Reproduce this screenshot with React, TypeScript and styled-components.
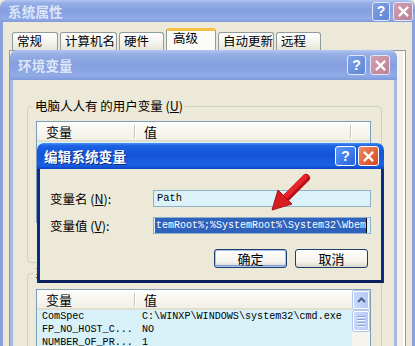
import styled, { createGlobalStyle } from "styled-components";

const CJK = `"Noto Sans CJK SC", "Noto Sans", sans-serif`;
const MONO = `"Liberation Mono", "Noto Sans CJK SC", monospace`;

const GlobalStyle = createGlobalStyle`
  html, body {
    margin: 0;
    padding: 0;
    background: #ece9d8;
  }
  body {
    font-family: ${CJK};
    font-size: 12px;
    color: #000;
  }
`;

const ACTIVE_BAR =
  "linear-gradient(180deg, #4a94f8 0%, #1d63e4 10%, #1453d8 45%, #1a60e6 85%, #0d44c2 100%)";
const INACTIVE_BAR =
  "linear-gradient(180deg, #b2c6f2 0%, #95aee6 14%, #859fe0 50%, #91abe6 86%, #7f99da 100%)";

const Desktop = styled.div`
  position: relative;
  width: 415px;
  height: 346px;
  overflow: hidden;
  background: #ece9d8;
`;

const Window = styled.div<{ $x: number; $y: number; $w: number; $h: number }>`
  position: absolute;
  left: ${(p) => p.$x}px;
  top: ${(p) => p.$y}px;
  width: ${(p) => p.$w}px;
  height: ${(p) => p.$h}px;
  display: flex;
  flex-direction: column;
`;

const TitleBar = styled.div<{ $active?: boolean; $h: number; $pl: number; $pr: number }>`
  flex: none;
  height: ${(p) => p.$h}px;
  display: flex;
  align-items: center;
  padding: 0 ${(p) => p.$pr}px 0 ${(p) => p.$pl}px;
  border-radius: 7px 7px 0 0;
  background: ${(p) => (p.$active ? ACTIVE_BAR : INACTIVE_BAR)};
`;

const Title = styled.div<{ $active?: boolean }>`
  flex: 1;
  font-family: ${CJK};
  font-weight: 700;
  font-size: 13.5px;
  letter-spacing: 0.2px;
  color: ${(p) => (p.$active ? "#ffffff" : "#dde6f8")};
  text-shadow: ${(p) => (p.$active ? "1px 1px 0 #0b2a7c" : "none")};
`;

const CaptionButtons = styled.div<{ $gap: number }>`
  display: flex;
  gap: ${(p) => p.$gap}px;
`;

const CapButton = styled.div<{ $kind: "help" | "close"; $active?: boolean; $w: number; $h: number }>`
  width: ${(p) => p.$w}px;
  height: ${(p) => p.$h}px;
  box-sizing: border-box;
  display: flex;
  align-items: center;
  justify-content: center;
  border-radius: 3px;
  border: 1px solid ${(p) => (p.$active ? "#ffffff" : "#dfe6f7")};
  background: ${(p) =>
    p.$kind === "help"
      ? p.$active
        ? "linear-gradient(135deg, #5d9bf8, #2463dc)"
        : "linear-gradient(135deg, #7fa2e4, #5f85d6)"
      : p.$active
      ? "linear-gradient(135deg, #f08a64, #d8471e)"
      : "linear-gradient(135deg, #d3a0b2, #bb7f96)"};
  color: #fff;
  font-family: "Liberation Sans", sans-serif;
  font-weight: 700;
  font-size: 14px;
  line-height: 1;
`;

/* ---------- system properties window ---------- */

const SysBody = styled.div`
  flex: 1;
  display: flex;
  flex-direction: column;
  background: #ece9d8;
  border-left: 3px solid #8aa2dc;
  border-right: 3px solid #8aa2dc;
  padding: 6px 6px 0 6px;
`;

const TabRow = styled.div`
  display: flex;
  align-items: flex-end;
  gap: 2px;
  height: 22px;
  padding-left: 3px;
`;

const Tab = styled.div<{ $active?: boolean; $w: number }>`
  width: ${(p) => p.$w}px;
  height: ${(p) => (p.$active ? 22 : 18)}px;
  box-sizing: border-box;
  padding-left: ${(p) => (p.$active ? 6 : 4)}px;
  border: 1px solid #919b9c;
  border-bottom: none;
  border-top: ${(p) => (p.$active ? "3px solid #f5be45" : "1px solid #919b9c")};
  border-radius: 3px 3px 0 0;
  background: ${(p) =>
    p.$active ? "#fbfbf8" : "linear-gradient(180deg, #ffffff, #f3f2ec 60%, #e6e3d8)"};
  font-size: 12.5px;
  line-height: ${(p) => (p.$active ? 14 : 16)}px;
  white-space: nowrap;
`;

const TabPanel = styled.div`
  flex: 1;
  border: 1px solid #919b9c;
  border-bottom: none;
  background: #f3f1e8;
  box-shadow: inset -2px 0 0 #ffffff;
`;

/* ---------- environment variables window ---------- */

const EnvBody = styled.div`
  flex: 1;
  display: flex;
  flex-direction: column;
  background: #ece9d8;
  border-left: 3px solid #a9b8e0;
  border-right: 3px solid #a9b8e0;
  padding: 0 12px 0 14px;
`;

const GroupBox = styled.div<{ $mt: number; $h: number; $pt: number }>`
  position: relative;
  box-sizing: border-box;
  margin-top: ${(p) => p.$mt}px;
  height: ${(p) => p.$h}px;
  flex: none;
  border: 1px solid #d0d0bf;
  border-radius: 4px;
  padding: ${(p) => p.$pt}px 10px 0 8px;
`;

const Legend = styled.span`
  position: absolute;
  top: -9px;
  left: 5px;
  padding: 0 2px;
  background: #ece9d8;
  font-size: 12.5px;
  line-height: 16px;
  white-space: nowrap;
`;

const Key = styled.span`
  text-decoration: underline;
`;

const ListView = styled.div<{ $h: number }>`
  height: ${(p) => p.$h}px;
  display: flex;
  border: 1px solid #7f9db9;
  background: #d8f1f9;
  overflow: hidden;
`;

const ListMain = styled.div`
  flex: 1;
  min-width: 0;
  display: flex;
  flex-direction: column;
`;

const HeaderRow = styled.div<{ $filler?: boolean }>`
  display: grid;
  grid-template-columns: 98px 1fr ${(p) => (p.$filler ? "19px" : "")};
  height: 20px;
  flex: none;
  box-sizing: border-box;
  border-bottom: 2px solid #e2decd;
  background: linear-gradient(180deg, #fdfdfb, #f1efe6);
`;

const HeaderCell = styled.div<{ $last?: boolean }>`
  display: flex;
  align-items: center;
  padding-left: 9px;
  font-size: 13px;
  position: relative;
  &::after {
    content: "";
    display: ${(p) => (p.$last ? "none" : "block")};
    position: absolute;
    right: 0;
    top: 3px;
    bottom: 3px;
    width: 1px;
    background: #cbc7b8;
    box-shadow: 1px 0 0 #ffffff;
  }
`;

const Row = styled.div`
  display: grid;
  grid-template-columns: 100px 1fr;
  height: 13px;
  flex: none;
  padding-left: 5px;
  font-family: ${MONO};
  font-size: 10.1px;
  line-height: 13px;
  white-space: nowrap;
  &:first-of-type {
    margin-top: 2px;
  }
`;

const ScrollBar = styled.div`
  width: 18px;
  flex: none;
  display: flex;
  flex-direction: column;
  gap: 2px;
  padding-top: 1px;
  background: #f5f4ef;
`;

const ScrollPart = styled.div<{ $h: number }>`
  height: ${(p) => p.$h}px;
  margin: 0 1px;
  box-sizing: border-box;
  display: flex;
  flex-direction: column;
  align-items: center;
  justify-content: center;
  gap: 2px;
  border: 1px solid #ffffff;
  border-radius: 2px;
  background: linear-gradient(90deg, #c9d8fb, #b6cbf7);
  box-shadow: 0 0 0 1px #b3c6ee;
`;

const Grip = styled.div`
  width: 8px;
  height: 1px;
  background: #8ba4d8;
  box-shadow: 0 1px 0 #eef3fe;
`;

/* ---------- edit dialog ---------- */

const EditBody = styled.div`
  flex: 1;
  display: flex;
  flex-direction: column;
  background: #ece9d8;
  border: 3px solid #0c2d86;
  border-top: none;
  border-bottom-color: #0a1f5e;
  padding: 21px 10px 0 10px;
`;

const FieldGrid = styled.div`
  display: grid;
  grid-template-columns: 103px 1fr;
  grid-auto-rows: 17px;
  row-gap: 10px;
  align-items: center;
`;

const FieldLabel = styled.div`
  font-size: 12.5px;
  line-height: 17px;
  white-space: nowrap;
`;

const TextBox = styled.div`
  height: 17px;
  box-sizing: border-box;
  border: 1px solid #8fb0c8;
  background: #dcf2f9;
  padding: 0 1px;
  overflow: hidden;
  white-space: nowrap;
  font-family: ${MONO};
  font-size: 10.4px;
  line-height: 15px;
`;

const Plain = styled.span`
  padding-left: 2px;
`;

const Selection = styled.span`
  display: inline-block;
  height: 15px;
  padding-left: 1px;
  background: #2f62bd;
  color: #ffffff;
  font-size: 10px;
  border-right: 1px solid #000;
`;

const ButtonRow = styled.div`
  display: flex;
  justify-content: flex-end;
  gap: 8px;
  margin-top: 15px;
  padding-right: 3px;
`;

const XPButton = styled.div<{ $default?: boolean }>`
  width: 73px;
  height: 19px;
  box-sizing: border-box;
  display: flex;
  align-items: center;
  justify-content: center;
  border: 1px solid #1c3f6e;
  border-radius: 3px;
  background: linear-gradient(180deg, #ffffff, #f3f2ec 70%, #d9d5c8);
  box-shadow: ${(p) => (p.$default ? "inset 0 0 0 1px #a9c2ea, inset 0 -1px 0 1px #7ea0da" : "none")};
  font-size: 13px;
  line-height: 1;
`;

const Arrow = styled.svg`
  position: absolute;
  left: 262px;
  top: 168px;
`;

const CloseGlyph = ({ size }: { size: number }) => (
  <svg width={size} height={size} viewBox="0 0 10 10">
    <path d="M1.5 1.5 L8.5 8.5 M8.5 1.5 L1.5 8.5" stroke="#fff" strokeWidth="2" strokeLinecap="square" />
  </svg>
);

const tabs = [
  { label: "常规", w: 46 },
  { label: "计算机名", w: 57 },
  { label: "硬件", w: 45 },
  { label: "高级", w: 50, active: true },
  { label: "自动更新", w: 56 },
  { label: "远程", w: 45 },
];

const sysVars = [
  { name: "ComSpec", value: "C:\\WINXP\\WINDOWS\\system32\\cmd.exe" },
  { name: "FP_NO_HOST_C...", value: "NO" },
  { name: "NUMBER_OF_PR...", value: "1" },
];

export default function App() {
  return (
    <>
      <GlobalStyle />
      <Desktop>
        {/* 系统属性 */}
        <Window $x={0} $y={0} $w={415} $h={360}>
          <TitleBar $h={22} $pl={8} $pr={2}>
            <Title>系统属性</Title>
            <CaptionButtons $gap={3}>
              <CapButton $kind="help" $w={18} $h={19}>?</CapButton>
              <CapButton $kind="close" $w={20} $h={19}>
                <CloseGlyph size={11} />
              </CapButton>
            </CaptionButtons>
          </TitleBar>
          <SysBody>
            <TabRow>
              {tabs.map((t) => (
                <Tab key={t.label} $w={t.w} $active={t.active}>
                  {t.label}
                </Tab>
              ))}
            </TabRow>
            <TabPanel />
          </SysBody>
        </Window>

        {/* 环境变量 */}
        <Window $x={10} $y={50} $w={387} $h={320}>
          <TitleBar $h={30} $pl={8} $pr={7}>
            <Title>环境变量</Title>
            <CaptionButtons $gap={4}>
              <CapButton $kind="help" $w={19} $h={20}>?</CapButton>
              <CapButton $kind="close" $w={20} $h={20}>
                <CloseGlyph size={11} />
              </CapButton>
            </CaptionButtons>
          </TitleBar>
          <EnvBody>
            <GroupBox $mt={26} $h={157} $pt={14}>
              <Legend>
                电脑人人有 的用户变量 (<Key>U</Key>)
              </Legend>
              <ListView $h={100}>
                <ListMain>
                  <HeaderRow $filler>
                    <HeaderCell>变量</HeaderCell>
                    <HeaderCell>值</HeaderCell>
                    <HeaderCell $last />
                  </HeaderRow>
                </ListMain>
              </ListView>
            </GroupBox>
            <GroupBox $mt={10} $h={120} $pt={15}>
              <Legend>
                系统变量 (<Key>S</Key>)
              </Legend>
              <ListView $h={90}>
                <ListMain>
                  <HeaderRow>
                    <HeaderCell>变量</HeaderCell>
                    <HeaderCell $last>值</HeaderCell>
                  </HeaderRow>
                  {sysVars.map((v) => (
                    <Row key={v.name}>
                      <span>{v.name}</span>
                      <span>{v.value}</span>
                    </Row>
                  ))}
                </ListMain>
                <ScrollBar>
                  <ScrollPart $h={18}>
                    <svg width="9" height="6" viewBox="0 0 9 6">
                      <path d="M1 5 L4.5 1.5 L8 5" fill="none" stroke="#4d6185" strokeWidth="2" />
                    </svg>
                  </ScrollPart>
                  <ScrollPart $h={20}>
                    <Grip />
                    <Grip />
                    <Grip />
                    <Grip />
                  </ScrollPart>
                </ScrollBar>
              </ListView>
            </GroupBox>
          </EnvBody>
        </Window>

        {/* 编辑系统变量 */}
        <Window $x={37} $y={143} $w={347} $h={140}>
          <TitleBar $active $h={26} $pl={7} $pr={5}>
            <Title $active>编辑系统变量</Title>
            <CaptionButtons $gap={2}>
              <CapButton $kind="help" $active $w={21} $h={20}>?</CapButton>
              <CapButton $kind="close" $active $w={21} $h={20}>
                <CloseGlyph size={11} />
              </CapButton>
            </CaptionButtons>
          </TitleBar>
          <EditBody>
            <FieldGrid>
              <FieldLabel>
                变量名 (<Key>N</Key>):
              </FieldLabel>
              <TextBox>
                <Plain>Path</Plain>
              </TextBox>
              <FieldLabel>
                变量值 (<Key>V</Key>):
              </FieldLabel>
              <TextBox>
                <Selection>{"temRoot%;%SystemRoot%\\System32\\Wbem"}</Selection>
              </TextBox>
            </FieldGrid>
            <ButtonRow>
              <XPButton $default>确定</XPButton>
              <XPButton>取消</XPButton>
            </ButtonRow>
          </EditBody>
        </Window>

        <Arrow width="50" height="50" viewBox="0 0 50 50">
          <path d="M44 10 L23 31" stroke="#b3121a" strokeWidth="8" strokeLinecap="round" />
          <path d="M43 9 L22 30" stroke="#e8242a" strokeWidth="5" strokeLinecap="round" />
          <polygon points="10,42 16,22 30,36" fill="#d81c22" stroke="#a9121a" strokeWidth="1" />
        </Arrow>
      </Desktop>
    </>
  );
}
